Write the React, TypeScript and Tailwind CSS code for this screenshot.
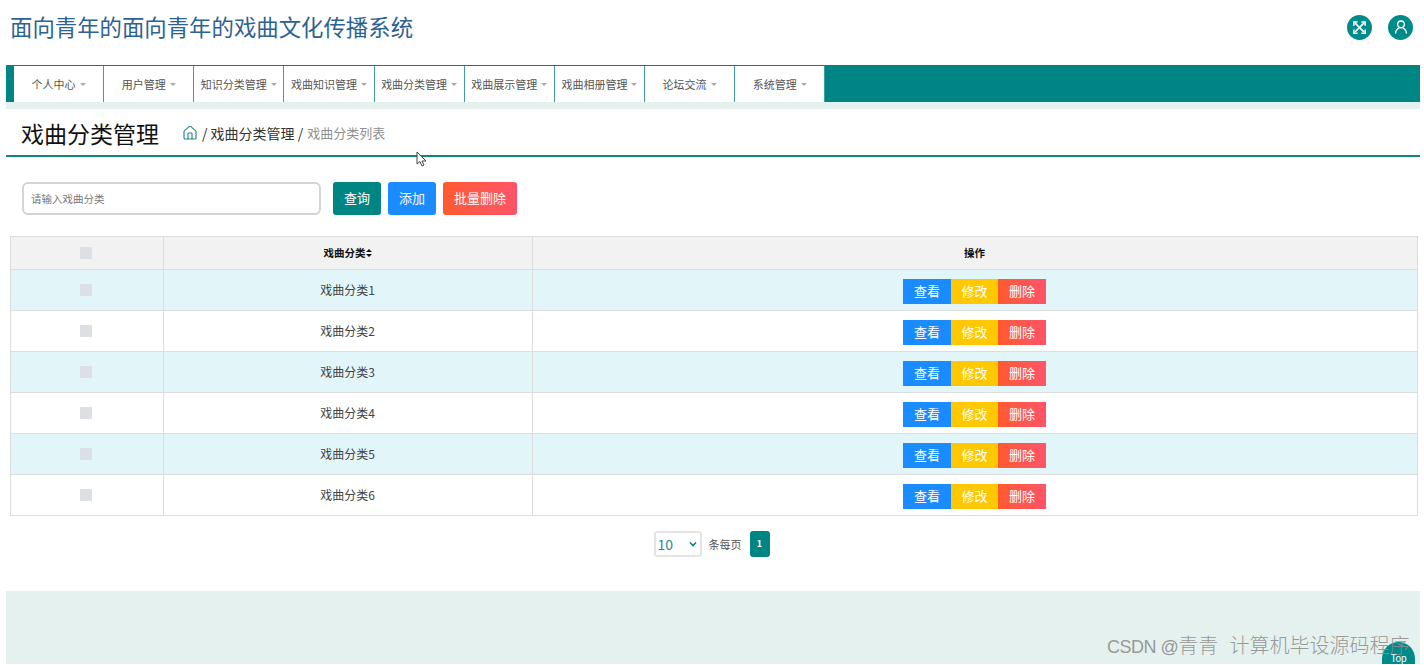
import { UserRound, Home } from "lucide-react";

const menus = [
  "个人中心",
  "用户管理",
  "知识分类管理",
  "戏曲知识管理",
  "戏曲分类管理",
  "戏曲展示管理",
  "戏曲相册管理",
  "论坛交流",
  "系统管理",
];

const rows = ["戏曲分类1", "戏曲分类2", "戏曲分类3", "戏曲分类4", "戏曲分类5", "戏曲分类6"];

const fontStack = { fontFamily: '"Noto Sans CJK SC", "Liberation Sans", sans-serif' };

const Check = () => <span className="block w-3 h-3 bg-[#dcdfe4] mx-auto" />;

const Caret = () => (
  <span className="ml-1 inline-block w-0 h-0 border-x-[3px] border-x-transparent border-t-[3px] border-t-[#aaaaaa] align-middle" />
);

export default function App() {
  return (
    <div className="relative w-[1424px] h-[665px] overflow-hidden bg-white" style={fontStack}>
      <header className="h-[65px] flex items-center justify-between pl-[10px] pr-[11px]">
        <h1 className="text-[22.4px] leading-none text-[#2c6390] mt-[-12px]">面向青年的面向青年的戏曲文化传播系统</h1>
        <div className="flex gap-[16px] mt-[-11px]">
          <span className="w-[25px] h-[25px] rounded-full bg-[#008b8b] flex items-center justify-center text-white">
            <svg width="15" height="15" viewBox="0 0 24 24" fill="none" stroke="currentColor" strokeWidth="2.4">
              <path d="M5 5 L19 19 M19 5 L5 19" />
              <path d="M3 9 V3 H9 M15 3 H21 V9 M21 15 V21 H15 M9 21 H3 V15" />
            </svg>
          </span>
          <span className="w-[25px] h-[25px] rounded-full bg-[#008b8b] flex items-center justify-center text-white">
            <UserRound size={16} />
          </span>
        </div>
      </header>

      <div className="ml-[6px] w-[1414px] h-[599px] flex flex-col">
        <nav className="h-[37px] bg-[#008585] pl-[8px] flex shrink-0">
          {menus.map((m) => (
            <a
              key={m}
              className="w-[90.15px] h-[36px] mt-[1px] bg-white border-r border-r-[#3f9f9f] flex items-center justify-center text-[11px] text-[#555555] whitespace-nowrap"
            >
              {m}
              <Caret />
            </a>
          ))}
        </nav>
        <div className="h-[7px] bg-[#e5f1ee] shrink-0" />

        <div className="h-[48px] border-b-[2px] border-b-[#0f8585] flex items-center pl-[15px] shrink-0">
          <h2 className="text-[23px] leading-none text-[#111111] w-[162px] mt-[2px]">戏曲分类管理</h2>
          <Home size={16} className="text-[#2b8a8a] ml-[-1px] mt-[1px]" strokeWidth={1.8} />
          <span className="text-[14px] text-[#333333] ml-[4px] mt-[2px]">/ 戏曲分类管理 /</span>
          <span className="text-[13px] text-[#8f8f8f] ml-[4px] mt-[2px]">戏曲分类列表</span>
        </div>

        <div className="flex items-center pl-[16px] pt-[25px] shrink-0">
          <input
            readOnly
            placeholder="请输入戏曲分类"
            className="w-[299px] h-[33px] border-2 border-[#d4d4d4] rounded-[6px] px-[7px] text-[10.5px] placeholder:text-[#777777] outline-none"
          />
          <button className="ml-[12px] w-[48px] h-[33px] pb-[2px] rounded-[3px] bg-[#008585] text-white text-[13px]">查询</button>
          <button className="ml-[7px] w-[48px] h-[33px] pb-[2px] rounded-[3px] bg-[#1a8cff] text-white text-[13px]">添加</button>
          <button className="ml-[7px] w-[74px] h-[33px] pb-[2px] rounded-[3px] bg-gradient-to-r from-[#ff5a2c] to-[#ff5468] text-white text-[13px]">
            批量删除
          </button>
        </div>

        <table className="ml-[4px] mt-[21px] w-[1408px] table-fixed border-collapse border border-[#dcdcdc] shrink-0">
          <colgroup>
            <col className="w-[153px]" />
            <col className="w-[369px]" />
            <col />
          </colgroup>
          <thead>
            <tr className="h-[33px] bg-[#f2f2f2] text-[10.5px] font-bold text-[#111111]">
              <th className="border border-[#dddddd] pr-[2px]"><Check /></th>
              <th className="border border-[#dddddd] pr-[1px]">
                <span className="inline-flex items-center">
                  戏曲分类
                  <svg width="6" height="8" viewBox="0 0 6 8">
                    <path d="M3 0 L6 3 L0 3 Z M0 5 L6 5 L3 8 Z" fill="#111111" />
                  </svg>
                </span>
              </th>
              <th className="border border-[#dddddd] pr-[1px]">操作</th>
            </tr>
          </thead>
          <tbody>
            {rows.map((r, i) => (
              <tr key={r} className={`h-[41px] text-[12px] text-[#444444] ${i % 2 === 0 ? "bg-[#e2f6f9]" : "bg-white"}`}>
                <td className="border border-[#dddddd] pr-[2px]"><Check /></td>
                <td className="border border-[#dddddd] text-center pr-[1px]">{r}</td>
                <td className="border border-[#dddddd] pr-[1px]">
                  <div className="flex justify-center pt-[2px] text-white text-[13px]">
                    <span className="w-[48px] h-[25px] bg-[#1a8cff] flex items-center justify-center">查看</span>
                    <span className="w-[47px] h-[25px] bg-[#ffc800] flex items-center justify-center">修改</span>
                    <span className="w-[48px] h-[25px] bg-gradient-to-r from-[#ff5a2c] to-[#ff5468] flex items-center justify-center">删除</span>
                  </div>
                </td>
              </tr>
            ))}
          </tbody>
        </table>

        <div className="flex items-center justify-center pt-[15px] pr-[3px] shrink-0">
          <div className="w-[48px] h-[26px] border-2 border-[#e4e4e4] rounded-[3px] flex items-center justify-between pl-[2px] pr-[3px] text-[#2b8a8a] text-[14px]">
            10
            <svg width="8" height="6" viewBox="0 0 8 6" className="text-[#008585]">
              <path d="M1 1.5 L4 4.5 L7 1.5" fill="none" stroke="currentColor" strokeWidth="1.6" />
            </svg>
          </div>
          <span className="ml-[7px] text-[11px] text-[#555555]">条每页</span>
          <span className="ml-[8px] w-[20px] h-[26px] rounded-[3px] bg-[#008585] text-white text-[9px] font-bold flex items-center justify-center">1</span>
        </div>

        <div className="mt-auto h-[73px] bg-[#e5f1ee] shrink-0" />
      </div>

      {/* screen capture leftovers over the page */}
      <svg className="absolute left-[416px] top-[151px]" width="12" height="17" viewBox="0 0 12 17">
        <path d="M1 1 L1 13 L4 10.5 L6 15 L8 14 L6 10 L10 10 Z" fill="#ffffff" stroke="#444444" strokeWidth="1" />
      </svg>
      <div className="absolute left-[1382px] top-[642px] w-[33px] h-[22px] rounded-t-full bg-[#008b8b] text-white text-[10px] text-center pt-[12px] leading-none" style={{ fontFamily: '"Liberation Sans", sans-serif' }}>
        Top
      </div>
      <div className="absolute left-[1107px] top-[633px] text-[20px] leading-[26px] font-light text-[#8d8d8d]/90 whitespace-pre" style={{ fontFamily: '"Liberation Sans", "Noto Sans CJK SC", sans-serif' }}>
        <span className="text-[18px] tracking-[-0.5px]">CSDN @</span>青青  计算机毕设源码程序
      </div>
    </div>
  );
}
